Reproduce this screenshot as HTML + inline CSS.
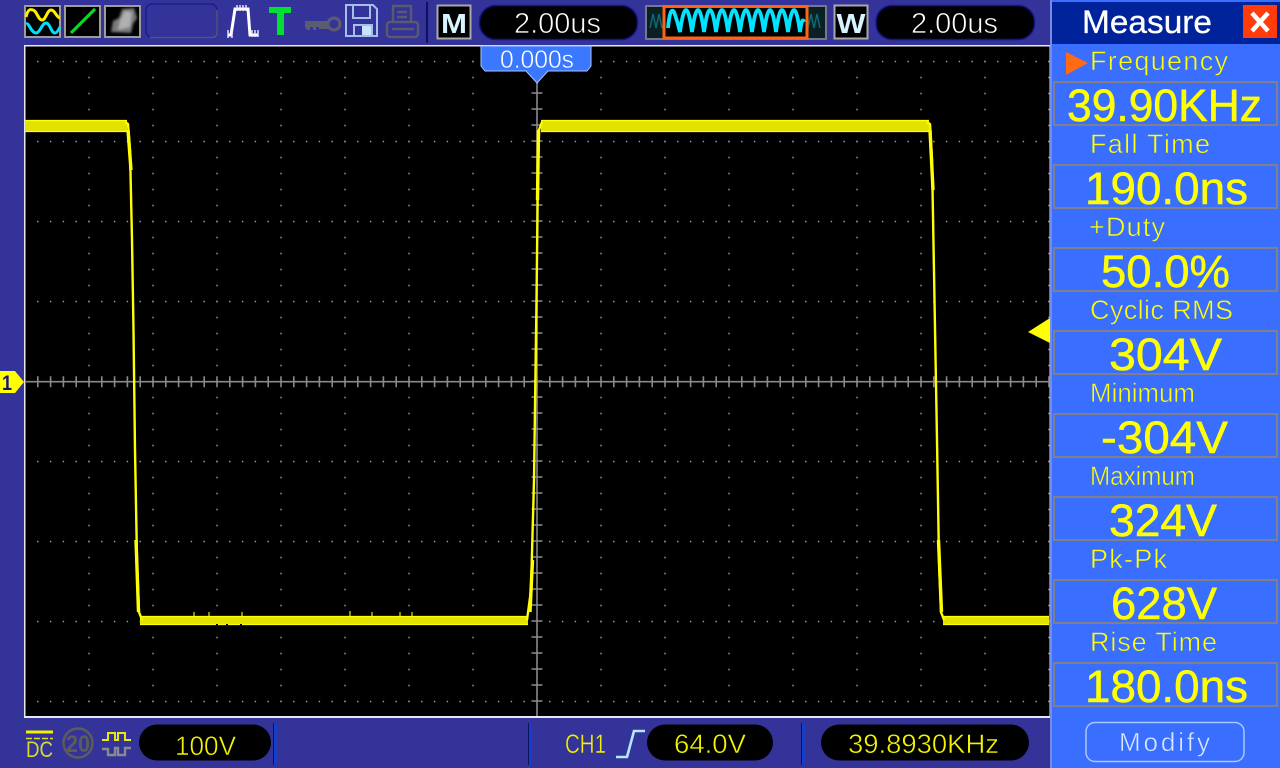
<!DOCTYPE html>
<html><head><meta charset="utf-8"><style>
html,body{margin:0;padding:0;background:#333399;width:1280px;height:768px;overflow:hidden}
svg{display:block;position:absolute;left:0;top:0}
text{font-family:"Liberation Sans",sans-serif}
.l{font-size:27px;fill:#ffff00;stroke:#3a6eff;stroke-width:.55}
.v{font-size:45px;fill:#ffff00;stroke:#ffff00;stroke-width:.5}
.b{font-size:27px;fill:#f4f400;stroke:#000;stroke-width:.5}
.w{font-size:29px;fill:#fff;stroke:#000;stroke-width:.7}
</style></head><body>
<svg width="1280" height="768" viewBox="0 0 1280 768" xmlns="http://www.w3.org/2000/svg">
<defs><filter id="bl" x="-20%" y="-20%" width="140%" height="140%"><feGaussianBlur stdDeviation="1.300"/></filter></defs>
<rect width="1280" height="768" fill="#333399"/>

<!-- screen -->
<rect x="24" y="45" width="1027" height="673" fill="#e8e8f0"/>
<rect x="25.5" y="46.5" width="1024" height="669.5" fill="#000"/>
<g fill="none" stroke="#a0a0a0" stroke-width="1.4">
<path stroke-dasharray="1.4 11.4" d="M37.1 61.5H1050M37.1 141.5H1050M37.1 221.5H1050M37.1 301.5H1050M37.1 461.5H1050M37.1 541.5H1050M37.1 621.5H1050M37.1 701.5H1050"/>
<path stroke-dasharray="1.4 14.6" d="M89 60.8V702M153 60.8V702M217 60.8V702M281 60.8V702M345 60.8V702M409 60.8V702M473 60.8V702M601 60.8V702M665 60.8V702M729 60.8V702M793 60.8V702M857 60.8V702M921 60.8V702M985 60.8V702M1049 60.8V702"/>
</g>
<g fill="none" stroke="#8a8a8a">
<path stroke-width="1.6" d="M26 381.7H1050M537 80V716"/>
<path stroke-width="11" stroke-dasharray="1.6 11.2" d="M37 381.7H1050"/>
<path stroke-width="11" stroke-dasharray="1.6 14.4" d="M537 92.2V716"/>
</g>

<!-- trace -->
<g fill="#e2e200">
<rect x="25" y="120" width="102" height="12"/>
<rect x="541" y="120" width="388" height="12"/>
<rect x="140" y="616" width="388" height="9"/>
<rect x="943" y="616" width="106" height="9"/>
</g>
<g fill="none" stroke="#ffff00">
<path stroke-width="2.4" d="M125 122L128 124L130 150L132 240L133.500 330L135 450L137 560L139 612L142 620"/>
<path stroke-width="3.400" d="M128 130L131 170M136 540L138.500 612"/>
<path stroke-width="2.4" d="M527 620L531 590L534 480L536.500 300L538 170L539 130L542 122"/>
<path stroke-width="3.400" d="M538.500 130L537.500 200M530 612L532.500 560"/>
<path stroke-width="2.4" d="M927 122L930 124L932 160L934.500 300L937 440L939 560L941 612L944 620"/>
<path stroke-width="3.400" d="M930 130L933 190M938.500 540L941.500 612"/>
<path stroke-width="1.2" d="M25 120.5H127M541 120.500H929M25 131.500H128M541 131.500H929M140 616.500H528M140 624.500H528M943 616.500H1049M943 624.500H1049"/>
<path stroke-width="1.2" stroke="#e8e800" d="M194 612V616M209 612V616M242 612V616M350 611V616M372 612V616M400 612V616M412 612V616"/>
</g>
<g fill="#000"><rect x="216" y="624" width="2" height="2"/><rect x="226" y="624" width="2" height="2"/><rect x="240" y="624" width="2" height="2"/></g>

<!-- top marker -->
<path d="M481 46H591V66L587 71H548L537 83L526 71H485L481 66Z" fill="#3a78ff" stroke="#a8c4ff" stroke-width="1"/>
<text x="500" y="68" font-size="25" fill="#fff" stroke="#3a78ff" stroke-width=".5" textLength="74" lengthAdjust="spacingAndGlyphs">0.000s</text>

<!-- channel marker -->
<path d="M0 371H15L24 382L15 393H0Z" fill="#ffff00"/>
<text x="2" y="390" font-size="21" font-weight="bold" fill="#12127a" textLength="10" lengthAdjust="spacingAndGlyphs">1</text>
<!-- trigger marker -->
<path d="M1028 332L1050 318V343Z" fill="#ffff00"/>

<!-- toolbar icons -->
<g fill="#000" stroke="#9c9c9c" stroke-width="2">
<rect x="25" y="6" width="35" height="31"/>
<rect x="65" y="6" width="35" height="31"/>
<rect x="105" y="6" width="35" height="31"/>
</g>
<path d="M26 17C28 9 30 9 33 10C37 11 38 20 42 20C46 20 47 10 51 10C55 10 56 17 60 18" fill="none" stroke="#ffee00" stroke-width="3"/>
<path d="M26 24C29 22 31 33 36 33C40 33 42 23 46 23C50 23 51 33 55 33C57 33 59 29 60 27" fill="none" stroke="#00e0ff" stroke-width="3"/>
<path d="M71 33L95 9" stroke="#00dd22" stroke-width="3.2" fill="none"/>
<g filter="url(#bl)">
<path d="M111 32L113 21L119 18L122 9L134 8L137 18L133 24L131 33Z" fill="#7a7a7a"/>
<path d="M118 30L120 20L125 11L132 12L130 27Z" fill="#b0b0b0"/>
</g>
<rect x="146" y="4" width="71" height="33.500" rx="6" fill="#333399" stroke="#1c1c90" stroke-width="1.500"/>
<path d="M217 10V32Q217 37.500 211 37.500H150" fill="none" stroke="#55557a" stroke-width="1.500"/>
<path d="M228 35H231L235 9H248L250 35H258" fill="none" stroke="#fff" stroke-width="3"/>
<path d="M237 5V11M240 5V11M243 5V11M246 5V11M228 30V38M232 30V38M252 30V37M255 30V37M258 30V37" stroke="#eef" stroke-width="1.400"/>
<path d="M269 7H291V13H284V35H277V13H269Z" fill="#00e030"/>
<path d="M305 21H328V29H319V27H316V30H313V27H310V30H307L305 27Z" fill="#5c5c70"/>
<circle cx="334" cy="24" r="6" fill="none" stroke="#5c5c70" stroke-width="3"/>
<path d="M346 5H373L377 9V36H346Z" fill="#333399" stroke="#a4c0e8" stroke-width="2"/>
<path d="M353 6V18H370V6M354 36V25H372V36" fill="none" stroke="#a4c0e8" stroke-width="2"/>
<rect x="362" y="26" width="9" height="9" fill="#c8e4ff"/>
<g fill="none" stroke="#5a5a6c" stroke-width="2.400">
<path d="M393 22V6H411V22"/><rect x="387" y="22" width="31" height="15" rx="3"/>
<path d="M397 12H407M397 17H407M392 29H414"/>
</g>
<rect x="426" y="2" width="2" height="41" fill="#101060"/>

<!-- M -->
<rect x="437.500" y="5.500" width="33" height="33" fill="#000" stroke="#a8a8a8" stroke-width="2"/>
<text x="441" y="33" font-size="28" font-weight="bold" fill="#d8f4ff" textLength="26" lengthAdjust="spacingAndGlyphs">M</text>
<rect x="479.500" y="5.500" width="158" height="34" rx="16" fill="#000" stroke="#15158c" stroke-width="1.500"/>
<text class="w" x="514" y="33" textLength="87" lengthAdjust="spacingAndGlyphs">2.00us</text>

<!-- nav bar -->
<rect x="646" y="6" width="180" height="33" fill="#0a2024" stroke="#77778a" stroke-width="2"/>
<path d="M650 28l3-14 3 14 3-14 3 14M808 28l3-14 3 14 3-14 3 14" fill="none" stroke="#0c6a74" stroke-width="1.500"/>
<rect x="664" y="6.500" width="143" height="31.500" fill="#000" stroke="#ff6414" stroke-width="3"/>
<path d="M668 28Q670 6 674 12Q677 20 680 32Q683 10 686 10Q689 10 692 32Q695 10 698 10Q701 10 704 32Q707 10 710 10Q713 10 716 32Q719 10 722 10Q725 10 728 32Q731 10 734 10Q737 10 740 32Q743 10 746 10Q749 10 752 32Q755 10 758 10Q761 10 764 32Q767 10 770 10Q773 10 776 32Q779 10 782 10Q785 10 788 32Q791 10 794 10Q797 10 800 32Q802 16 804 22" fill="none" stroke="#00e4ff" stroke-width="3.800"/>

<!-- W -->
<rect x="834.500" y="5.500" width="33" height="33" fill="#000" stroke="#a8a8a8" stroke-width="2"/>
<text x="836.500" y="33" font-size="28" font-weight="bold" fill="#d8f4ff" textLength="29" lengthAdjust="spacingAndGlyphs">W</text>
<rect x="876" y="5.500" width="158.500" height="34" rx="16" fill="#000" stroke="#15158c" stroke-width="1.500"/>
<text class="w" x="911" y="33" textLength="87" lengthAdjust="spacingAndGlyphs">2.00us</text>

<!-- right panel -->
<rect x="1050" y="0" width="230" height="768" fill="#3a6eff"/>
<rect x="1050" y="0" width="2" height="768" fill="#7a8ce0"/>
<rect x="1052" y="2" width="228" height="42" fill="#00229a"/>
<text x="1082" y="33" font-size="32" fill="#fff" stroke="#fff" stroke-width=".3" textLength="130" lengthAdjust="spacingAndGlyphs">Measure</text>
<rect x="1243" y="5" width="34" height="33" fill="#ff3c0a"/>
<path d="M1252 13L1268 31M1268 13L1252 31" stroke="#fff" stroke-width="4.500" fill="none"/>
<path d="M1066 52L1088 63L1066 75Z" fill="#ff6a14"/>

<g fill="none" stroke="#808088" stroke-width="2">
<rect x="1054" y="82" width="223" height="43"/>
<rect x="1054" y="165" width="223" height="43"/>
<rect x="1054" y="248" width="223" height="43"/>
<rect x="1054" y="331" width="223" height="43"/>
<rect x="1054" y="414" width="223" height="43"/>
<rect x="1054" y="497" width="223" height="43"/>
<rect x="1054" y="580" width="223" height="43"/>
<rect x="1054" y="663" width="223" height="43"/>
</g>

<text class="l" x="1090" y="70" textLength="138">Frequency</text>
<text class="l" x="1090" y="153" textLength="120">Fall Time</text>
<text class="l" x="1089" y="236" textLength="76">+Duty</text>
<text class="l" x="1090" y="319" textLength="143">Cyclic RMS</text>
<text class="l" x="1090" y="402" textLength="105" lengthAdjust="spacingAndGlyphs">Minimum</text>
<text class="l" x="1090" y="485" textLength="105" lengthAdjust="spacingAndGlyphs">Maximum</text>
<text class="l" x="1090" y="568" textLength="77">Pk-Pk</text>
<text class="l" x="1090" y="651" textLength="127">Rise Time</text>

<text class="v" x="1067" y="121" textLength="195" lengthAdjust="spacingAndGlyphs">39.90KHz</text>
<text class="v" x="1085" y="204" textLength="163" lengthAdjust="spacingAndGlyphs">190.0ns</text>
<text class="v" x="1101" y="287" textLength="129" lengthAdjust="spacingAndGlyphs">50.0%</text>
<text class="v" x="1109" y="370" textLength="113" lengthAdjust="spacingAndGlyphs">304V</text>
<text class="v" x="1101" y="453" textLength="127" lengthAdjust="spacingAndGlyphs">-304V</text>
<text class="v" x="1109" y="536" textLength="108" lengthAdjust="spacingAndGlyphs">324V</text>
<text class="v" x="1111" y="619" textLength="106" lengthAdjust="spacingAndGlyphs">628V</text>
<text class="v" x="1085" y="702" textLength="163" lengthAdjust="spacingAndGlyphs">180.0ns</text>

<rect x="1086" y="722.500" width="158" height="39" rx="9" fill="#3a6eff" stroke="#a8c8ff" stroke-width="1.500"/>
<text x="1119" y="751" font-size="26" fill="#d8e8ff" stroke="#3a6eff" stroke-width=".5" textLength="91">Modify</text>

<!-- bottom bar -->
<path d="M26 732H53" stroke="#f0f000" stroke-width="3"/>
<path d="M26 738.500H53" stroke="#e0e020" stroke-width="1.500" stroke-dasharray="6 2"/>
<text x="26" y="757" font-size="22" fill="#d8d830" textLength="27" lengthAdjust="spacingAndGlyphs">DC</text>
<circle cx="78" cy="743" r="14.500" fill="none" stroke="#5c5c58" stroke-width="2.500"/>
<text x="66" y="752" font-size="24" font-weight="bold" fill="#5c5c58" textLength="24" lengthAdjust="spacingAndGlyphs">20</text>
<path d="M102 740H108V733H115V740H118V733H125V740H131" fill="none" stroke="#e8e800" stroke-width="2"/>
<path d="M102 749H108V755H115V748H118V755H125V748H131" fill="none" stroke="#8a8a90" stroke-width="2.400"/>
<rect x="139" y="724.500" width="132" height="36" rx="18" fill="#000"/>
<text class="b" x="175" y="755" textLength="61" lengthAdjust="spacingAndGlyphs">100V</text>
<g fill="#1040d0">
<rect x="274" y="723" width="2.500" height="42"/>
<rect x="529" y="723" width="2.500" height="42"/>
<rect x="802" y="723" width="2.500" height="42"/>
</g>
<g fill="#101060">
<rect x="273" y="723" width="1" height="42"/>
<rect x="528" y="723" width="1" height="42"/>
<rect x="801" y="723" width="1" height="42"/>
</g>
<text x="565" y="753" font-size="27" fill="#f0f000" stroke="#333399" stroke-width=".4" textLength="41" lengthAdjust="spacingAndGlyphs">CH1</text>
<path d="M616 757H627L634 731H645" fill="none" stroke="#b4e8ff" stroke-width="2.600"/>
<rect x="647" y="724.500" width="126" height="36" rx="18" fill="#000"/>
<text class="b" x="674" y="753" textLength="72" lengthAdjust="spacingAndGlyphs">64.0V</text>
<rect x="821" y="724.500" width="208" height="36" rx="18" fill="#000"/>
<text class="b" x="848" y="753" textLength="151" lengthAdjust="spacingAndGlyphs">39.8930KHz</text>
</svg>
</body></html>
